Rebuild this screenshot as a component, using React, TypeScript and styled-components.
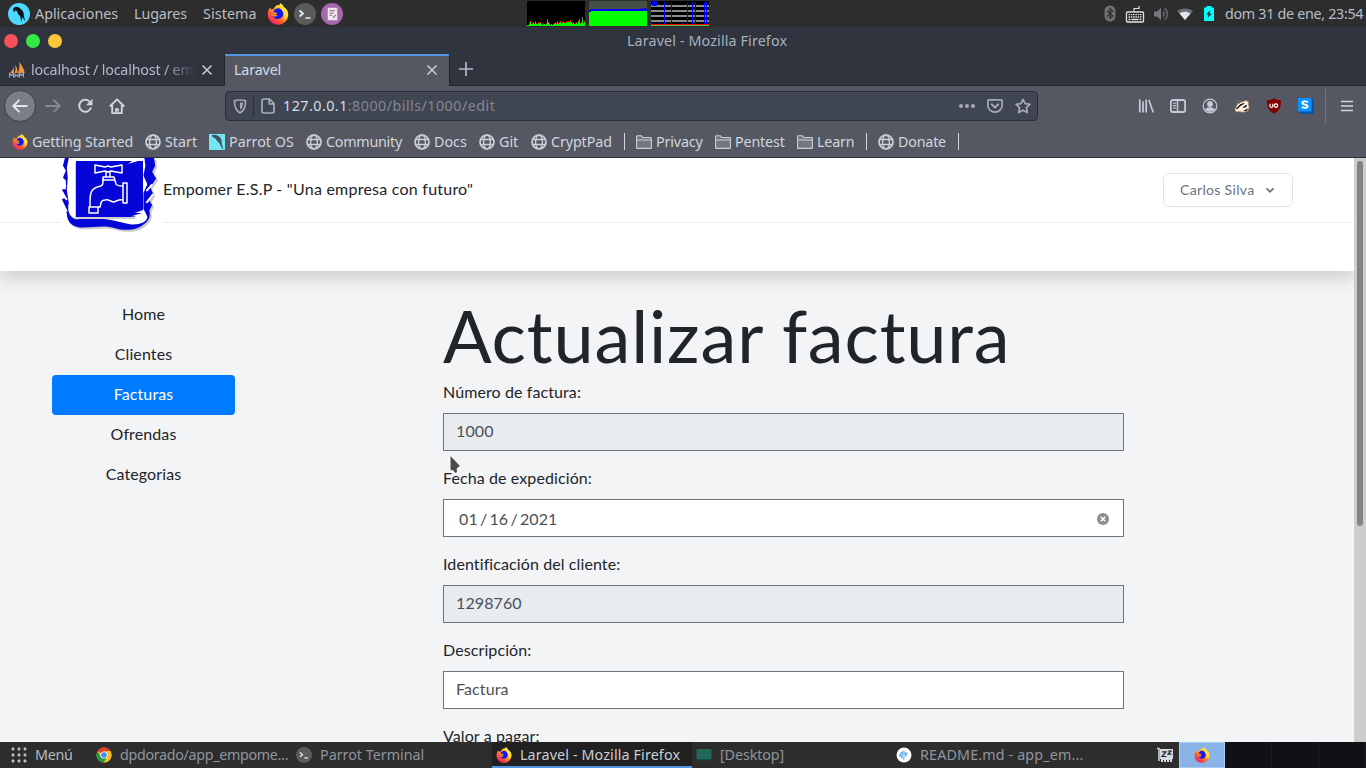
import React from 'react';
import styled, { createGlobalStyle } from 'styled-components';

const ui = '"Noto Sans", "Open Sans", sans-serif';
const web = 'Lato, "Noto Sans", sans-serif';

const GlobalStyle = createGlobalStyle`
  * { box-sizing: border-box; }
  body { margin: 0; overflow: hidden; background: #2d2d2d; }
  svg { display: block; flex: none; }
`;

const Screen = styled.div`
  position: relative;
  width: 1366px;
  height: 768px;
  display: flex;
  flex-direction: column;
  overflow: hidden;
  font: 14.3px/20px ${ui};
`;

const Label = styled.span<{ $w?: number; $ls?: number; $color?: string }>`
  flex: none;
  white-space: pre;
  width: ${p => (p.$w ? p.$w + 'px' : 'auto')};
  letter-spacing: ${p => p.$ls ?? 0}px;
  color: ${p => p.$color ?? 'inherit'};
`;

const TopPanel = styled.header`
  height: 27px;
  flex: none;
  display: flex;
  align-items: center;
  padding: 0 4px 0 8px;
  background: #2d2d2d;
  color: #b9bec6;
`;
const PanelMenus = styled.div`
  display: flex;
  align-items: center;
  flex: none;
  width: 237px;
  padding-left: 5px;
`;
const Launchers = styled.div`
  display: flex;
  flex: none;
  gap: 5px;
`;
const Monitors = styled.div`
  display: flex;
  flex: none;
  align-self: flex-start;
  padding-top: 1px;
  gap: 4px;
  margin: 0 auto 0 184px;
`;
const Tray = styled.div`
  display: flex;
  align-items: center;
`;
const TrayIcon = styled.div<{ $w: number }>`
  width: ${p => p.$w}px;
`;

const TitleBar = styled.div`
  height: 27px;
  flex: none;
  display: grid;
  grid-template-columns: 627px 1fr;
  align-items: center;
  background: #2f343f;
  color: #a9b0bc;
`;
const WindowButtons = styled.div`
  display: flex;
  gap: 8px;
  padding-left: 4px;
`;
const Dot = styled.i<{ $c: string }>`
  width: 14px;
  height: 14px;
  border-radius: 50%;
  background: ${p => p.$c};
`;

const TabStrip = styled.div`
  height: 32px;
  flex: none;
  display: flex;
  background: #2f343f;
  color: #b4bac6;
  border-bottom: 1px solid #22252e;
`;
const Tab = styled.div<{ $active?: boolean }>`
  display: flex;
  align-items: center;
  justify-content: space-between;
  flex: none;
  width: ${p => (p.$active ? 226 : 224)}px;
  height: ${p => (p.$active ? 32 : 31)}px;
  padding: ${p => (p.$active ? '1px 11px 1px 9px' : '2px 11px 1px 9px')};
  background: ${p => (p.$active ? '#555863' : 'transparent')};
  color: ${p => (p.$active ? '#d3dae3' : '#b4bac6')};
  border: ${p => (p.$active ? '1px solid #22252e' : '0')};
  border-width: ${p => (p.$active ? '0 1px' : '0')};
  box-shadow: ${p => (p.$active ? 'inset 0 2px #5294e2' : 'none')};
`;
const TabTitle = styled.div<{ $fade?: boolean }>`
  display: flex;
  align-items: center;
  gap: 6px;
  width: 187px;
  overflow: hidden;
  white-space: nowrap;
  mask-image: ${p => (p.$fade ? 'linear-gradient(90deg, #000 155px, transparent 187px)' : 'none')};
`;
const NewTab = styled.div`
  padding: 7px 8px;
`;

const NavBar = styled.div`
  height: 41px;
  flex: none;
  display: flex;
  align-items: center;
  padding-bottom: 1px;
  background: #555863;
  color: #c5cad6;
`;
const NavButtons = styled.div`
  display: flex;
  align-items: center;
  gap: 16px;
  width: 225px;
  padding-left: 4px;
`;
const BackButton = styled.div`
  display: grid;
  place-items: center;
  width: 32px;
  height: 32px;
  border-radius: 50%;
  border: 1px solid #3d404b;
  background: #7b7e86;
  margin-right: -7px;
`;
const UrlBar = styled.div`
  display: flex;
  align-items: center;
  width: 813px;
  height: 30px;
  padding: 0 6px 0 7px;
  border: 1px solid #2b2e39;
  border-radius: 4px;
  background: #404552;
  color: #828792;
`;
const UrlSep = styled.i`
  width: 1px;
  height: 22px;
  background: #2b2e39;
  margin: 0 7px 0 6px;
`;
const UrlText = styled.div`
  flex: 1;
  white-space: nowrap;
  letter-spacing: 0.47px;
  margin-left: 8px;
  b { font-weight: 400; color: #d8dce6; }
`;
const UrlActions = styled.div`
  display: flex;
  gap: 12px;
`;
const Extensions = styled.div`
  display: flex;
  align-items: center;
  gap: 16px;
  margin-left: 100px;
`;
const MenuButton = styled.div`
  display: flex;
  align-items: center;
  height: 34px;
  margin-left: 11px;
  padding-left: 14px;
  border-left: 1px solid #73767f;
`;

const Bookmarks = styled.nav`
  height: 31px;
  flex: none;
  display: flex;
  align-items: center;
  padding: 0 0 1px 12px;
  background: #555863;
  border-bottom: 1px solid #2b2e39;
  color: #d0d5de;
`;
const Bookmark = styled.div<{ $w: number; $ls?: number }>`
  display: flex;
  flex: none;
  align-items: center;
  gap: 4px;
  width: ${p => p.$w}px;
  letter-spacing: ${p => p.$ls ?? 0}px;
  white-space: nowrap;
`;
const BarSep = styled.i`
  width: 1px;
  height: 17px;
  margin-right: 11px;
  background: #d0d5de;
`;

const Viewport = styled.main`
  flex: 1;
  min-height: 0;
  display: flex;
  background: #f3f4f6;
  font: 16px/22px ${web};
  letter-spacing: 0.1px;
  color: #212529;
`;
const Page = styled.div`
  width: 1354px;
  overflow: hidden;
`;
const ScrollTrack = styled.div`
  width: 12px;
  padding: 3px;
  background: #cdcdcd;
`;
const ScrollThumb = styled.div`
  width: 6px;
  height: 365px;
  border-radius: 3px;
  background: #7f8383;
`;
const SiteHead = styled.div`
  height: 113px;
  background: #fff;
  box-shadow: 0 8px 16px rgba(0, 0, 0, 0.15);
`;
const SiteNav = styled.div`
  display: flex;
  align-items: center;
  justify-content: space-between;
  height: 65px;
  padding: 0 61px;
  border-bottom: 1px solid #edeef0;
`;
const Brand = styled.div`
  display: flex;
  align-items: flex-start;
  align-self: flex-start;
  height: 64px;
`;
const BrandText = styled.div`
  margin-top: 20px;
  letter-spacing: 0.23px;
`;
const UserButton = styled.div`
  display: flex;
  align-items: center;
  justify-content: space-between;
  width: 130px;
  height: 34px;
  padding: 0 15px 0 16px;
  border: 1px solid #dfe1e6;
  border-radius: 6px;
  color: #6b7280;
  font-size: 14px;
  letter-spacing: 0.33px;
`;
const Body = styled.div`
  display: flex;
  padding: 24px 0 0 52px;
`;
const Side = styled.nav`
  width: 183px;
  margin-right: 208px;
`;
const Pill = styled.div<{ $on?: boolean }>`
  height: 40px;
  line-height: 38px;
  text-align: center;
  border-radius: 4px;
  background: ${p => (p.$on ? '#007bff' : 'transparent')};
  color: ${p => (p.$on ? '#fff' : 'inherit')};
`;
const Form = styled.form`
  width: 681px;
`;
const Title = styled.h1`
  margin: -3.4px 0 3px;
  font-size: 72px;
  font-weight: 400;
  line-height: 86.4px;
  letter-spacing: 0.85px;
  white-space: nowrap;
`;
const Group = styled.div`
  height: 86px;
`;
const FieldLabel = styled.div`
  height: 24px;
  margin-bottom: 8px;
`;
const Field = styled.div<{ $off?: boolean }>`
  display: flex;
  align-items: center;
  justify-content: space-between;
  height: 38px;
  padding: 0 12px 2px;
  border: 1px solid #6c757d;
  background: ${p => (p.$off ? '#e9ecef' : '#fff')};
  color: #495057;
`;
const DateText = styled.span`
  padding: 3px 0 0 3px;
  word-spacing: -2px;
`;

const TaskBar = styled.footer`
  height: 26px;
  flex: none;
  display: flex;
  background: #2d2d2d;
  color: #8f959e;
`;
const Task = styled.div<{ $w: number; $on?: boolean; $pl?: number }>`
  display: flex;
  align-items: center;
  flex: none;
  gap: 8px;
  width: ${p => p.$w}px;
  padding-left: ${p => p.$pl ?? 4}px;
  background: ${p => (p.$on ? '#212121' : 'transparent')};
  color: ${p => (p.$on ? '#c9ced6' : 'inherit')};
  box-shadow: ${p => (p.$on ? 'inset 0 -2px #5294e2' : 'none')};
  white-space: nowrap;
`;
const Workspaces = styled.div`
  display: grid;
  grid-template-columns: 46px 47px 47px 47px;
  width: 187px;
  background: #0f1115;
`;
const Workspace = styled.div<{ $on?: boolean }>`
  display: grid;
  place-items: center;
  background: ${p => (p.$on ? '#8ab4e8' : 'transparent')};
  border: ${p => (p.$on ? '1px solid #a8cbf5' : '0 solid #1c1e22')};
  border-right-width: 1px;
`;
const Pointer = styled.div`
  position: absolute;
  left: 446px;
  top: 452px;
`;

const Firefox = ({ s = 16 }: { s?: number }) => (
  <svg width={s} height={s} viewBox="0 0 24 24">
    <defs>
      <linearGradient id="ffa" x1="0.85" y1="0.05" x2="0.2" y2="0.95">
        <stop offset="0" stopColor="#fff14a" />
        <stop offset="0.35" stopColor="#ffbd2b" />
        <stop offset="0.65" stopColor="#ff6a2a" />
        <stop offset="1" stopColor="#f5156c" />
      </linearGradient>
    </defs>
    <path d="M3.2 5.2 5 7l2.4-.6c1-3 4-4.600 6.600-4.400L14.500.3c2 1 3.200 2.600 3.900 4.300 3 1.600 4.800 4.800 4.800 8.300 0 6.200-5 10.800-11.200 10.800S.8 18.700.8 12.600C.8 9.500 1.800 7 3.200 5.200z" fill="url(#ffa)" />
    <path d="M7.500 8.300c1.800-2.600 5.500-3.300 7.800-1.500 2.800 2 3.200 6 1.200 8.600-2 2.500-6.500 2.900-8.700.7-1.200-1.200-1.600-2.700-1.300-4.200l3 .5 2.200-1.500c-1.400-.8-2.900-.9-4.400-.8z" fill="#1517f2" />
    <path d="M5.800 11.500c2 1.800 4 .6 5.200 1.400.6.700-.6 1.800-2 2-1.400 0-2.800-1-3.200-3.400z" fill="#ff9a20" />
    <path d="M14.500.3c2 1 3.200 2.600 3.900 4.300 2.800 1.500 4.600 4.500 4.700 7.700-.8 3.400-2.500 5-4.600 5.700 1.500-3.500.6-6.200-1-8.600C15.600 6.800 13.600 4 14.500.3z" fill="#ffdf3a" />
  </svg>
);

const Parrot = ({ s = 22, square = false }: { s?: number; square?: boolean }) => (
  <svg width={s} height={s} viewBox="0 0 22 22">
    {square ? <rect width="22" height="22" fill="#76e5f2" /> : <circle cx="11" cy="11" r="11" fill="#4fd8ff" />}
    <path d={square
      ? 'M3 2.500C7-.5 12 1.500 14.500 4c2.500 2 3 5 3 7.500.5 4 1 6.500 2.500 9.500-3-2-4.500-4.500-5-8-1 .5-2-1-3-3-1 0-2-2-3.500-4-2-.5-3-1.500-5-3.500z'
      : 'M5 6.500C5.500 3.500 9 3 11.500 5c3.500 2 4.500 5 4.300 7.500l1.400 6-3-4.500-1 5-1-6c-2-1-2.800-2.800-3-5C7.500 7 6.500 7.500 6.800 9.200 5.500 8.500 5 7.800 5 6.500z'}
      fill={square ? '#3d5566' : '#0c1116'} />
  </svg>
);

const Terminal = ({ s = 22 }: { s?: number }) => (
  <svg width={s} height={s} viewBox="0 0 22 22">
    <circle cx="11" cy="11" r="11" fill="#5b5b5b" />
    <path d="M5.500 7.500 9 10.500l-3.500 3M11.500 15h5" fill="none" stroke="#eee" strokeWidth="1.700" />
  </svg>
);

const Notes = () => (
  <svg width="22" height="22" viewBox="0 0 23 23">
    <circle cx="11.500" cy="11.500" r="11.500" fill="#a567ae" />
    <path d="M7 5h9l1 1v12H7z" fill="#eee6e8" />
    <path d="M9 8h5.500M9 10.500h4M9 13h2.500M12.500 15.500l3-3" stroke="#9b7b8f" strokeWidth="1.300" fill="none" />
  </svg>
);

const cpu = [1, 1, 3, 5, 2, 3, 4, 2, 5, 3, 2, 4, 3, 4, 2, 1, 3, 2, 1, 3, 7, 4, 3, 1, 2, 1, 2, 3, 4, 3, 5, 3, 4, 5, 3, 4, 5, 4, 3, 5, 4, 5, 4, 6, 4, 3, 4, 2, 3, 4, 2, 5, 7, 3, 4, 9, 3, 5];
const CpuGraph = () => (
  <svg width="58" height="25" shapeRendering="crispEdges">
    <rect width="58" height="25" fill="#000" />
    {cpu.map((h, i) => (
      <g key={i}>
        <rect x={i} y={25 - h} width="1" height={h} fill={h > 6 ? '#777' : '#e11'} />
        <rect x={i} y={25 - Math.ceil(h * 0.65)} width="1" height={Math.ceil(h * 0.65)} fill="#0f0" />
      </g>
    ))}
  </svg>
);
const MemGraph = () => (
  <svg width="58" height="25" shapeRendering="crispEdges">
    <rect width="58" height="25" fill="#455045" />
    <path d="M0 9h2V8h51V7h1v2h1V7h2v1h1v3H0z" fill="#00f" />
    <path d="M0 11h2v-1h56v15H0z" fill="#0f0" />
  </svg>
);
const NetGraph = () => (
  <svg width="58" height="25" shapeRendering="crispEdges">
    <rect width="58" height="25" fill="#000" />
    <path d="M0 5h58M0 10h58M0 15h58M0 20h58" stroke="#8b8b8b" strokeWidth="2" />
    <path d="M1 0h4.500v5H1zM13 1h1v22h-1zM20 1h1v22h-1zM36 1h1v22h-1zM41 1h1v22h-1zM44 1h1v22h-1zM53 1h1v22h-1zM55 1h1v22h-1zM0 22h3v1H0zM7 22h2v1H7zM30 22h3v1h-3z" fill="#00f" />
    <path d="M0 23h58v1H0z" fill="#f00" />
    <path d="M0 24h58v1H0z" fill="#5c3" />
  </svg>
);

const Bluetooth = () => (
  <svg width="12" height="17" viewBox="0 0 12 17">
    <rect x=".5" y=".5" width="11" height="16" rx="5.500" fill="#6f7175" />
    <path d="M3 5.500 8.800 11 6 13.500v-10L8.800 6 3 11.500" fill="none" stroke="#2d2d2d" strokeWidth="1.100" />
  </svg>
);
const Keyboard = () => (
  <svg width="20" height="20" viewBox="0 0 20 20">
    <path d="M9 7V4.500h5V2" fill="none" stroke="#ddd" strokeWidth="1.200" />
    <rect x="1.500" y="8" width="17" height="10" rx="1" fill="#222" stroke="#e4e4e4" strokeWidth="1.300" />
    <path d="M3.500 10.700h13M3.500 13h13" stroke="#e4e4e4" strokeWidth="1.300" strokeDasharray="1.500 .8" />
    <path d="M3.500 15.500h2M6.500 15.500h7M14.500 15.500h2" stroke="#e4e4e4" strokeWidth="1.300" />
  </svg>
);
const Speaker = () => (
  <svg width="16" height="16" viewBox="0 0 16 16">
    <path d="M1 5.500h3L8 2v12L4 10.500H1z" fill="#77797d" />
    <path d="M10 5.500c1.300 1.500 1.300 3.500 0 5M11.500 2.500c4 3 4 8 0 11" fill="none" stroke="#606266" strokeWidth="1.600" />
  </svg>
);
const Wifi = () => (
  <svg width="16" height="16" viewBox="0 0 16 16">
    <path d="M0 5C4 1.500 12 1.500 16 5l-8 9z" fill="#6d7076" />
    <path d="M2.500 7.500C6 5 10 5 13.500 7.500L8 14z" fill="#dfe5ee" />
  </svg>
);
const Battery = () => (
  <svg width="10" height="15" viewBox="0 0 10 15">
    <path d="M2.500 0h5v1.500H10V15H0V1.500h2.500z" fill="#00ffff" />
    <path d="M6.500 4 2 8.500h2.500L3.500 12 8 7.800H5.500z" fill="#2d2d2d" />
  </svg>
);

const Close = () => (
  <svg width="12" height="12" viewBox="0 0 12 12">
    <path d="m1.500 1.500 9 9m0-9-9 9" stroke="#c3c9d3" strokeWidth="1.600" />
  </svg>
);
const PhpMyAdmin = () => (
  <svg width="16" height="16" viewBox="0 0 16 16">
    <path d="M4.500 1.500c.5 3 .3 6-3.500 9.500h4zM5.800 2.500c1.200 2.500 1 5.500 0 8.500h2.700c.3-3.500-.6-6.500-2.700-8.500zM10 0c.8 3.500.5 7.500-1 11h6.800C15 7 13 3 10 0z" fill="#f4973b" />
    <path d="M.5 15.500v-4l2 2 2-2v4M6 15.500v-4M6 13.500h3M9 11.500v4M10.500 15.500v-4l2 2 2-2v4" fill="none" stroke="#a4a8c8" strokeWidth="1.100" />
  </svg>
);
const ArrowIcon = ({ flip = false }: { flip?: boolean }) => (
  <svg width="16" height="16" viewBox="0 0 16 16" transform={flip ? 'scale(-1 1)' : undefined}>
    <path d="M15.500 8H1.500M7.500 1.800 1.300 8l6.200 6.200" fill="none" stroke={flip ? '#868a95' : '#e2e6ee'} strokeWidth="1.900" strokeLinejoin="round" />
  </svg>
);
const Reload = () => (
  <svg width="16" height="16" viewBox="0 0 16 16">
    <path d="M12.500 3.600A6 6 0 1 0 14 9.500" fill="none" stroke="#d0d5df" strokeWidth="2" />
    <path d="M15.500.8v6.400H9z" fill="#d0d5df" />
  </svg>
);
const Home = () => (
  <svg width="16" height="16" viewBox="0 0 16 16">
    <path d="M.8 8.500 8 1.300l7.200 7.200M3.200 7v8.200h9.600V7" fill="none" stroke="#d0d5df" strokeWidth="1.900" strokeLinejoin="round" />
    <path d="M6.200 15v-4.800h3.600V15h-1v-2h-.9v2z" fill="#d0d5df" />
  </svg>
);
const Shield = () => (
  <svg width="14" height="15" viewBox="0 0 14 15">
    <path d="M7 1c2 0 4 .3 5.500.9C12.600 7 12 11 7 13.900 2 11 1.400 7 1.500 1.900 3 1.300 5 1 7 1z" fill="none" stroke="#a2a7b2" strokeWidth="1.700" />
    <path d="M7 3.500v7.500c2.300-1.700 2.900-4 3-7.200C9 3.600 8 3.500 7 3.500z" fill="#a2a7b2" />
  </svg>
);
const PageIcon = () => (
  <svg width="14" height="16" viewBox="0 0 14 16">
    <path d="M2.500 1H8.500l4.500 4.500v8c0 1-.5 1.500-1.500 1.500h-9c-1 0-1.500-.5-1.500-1.500v-11C1 1.500 1.500 1 2.500 1zM8.300 1v5H13" fill="none" stroke="#a9aeb9" strokeWidth="1.700" strokeLinejoin="round" />
  </svg>
);
const Dots = () => (
  <svg width="16" height="16" viewBox="0 0 16 16" fill="#a5aab5">
    <circle cx="2" cy="8" r="2" /><circle cx="8" cy="8" r="2" /><circle cx="14" cy="8" r="2" />
  </svg>
);
const Pocket = () => (
  <svg width="16" height="16" viewBox="0 0 16 16" fill="none" stroke="#a5aab5" strokeLinecap="round" strokeLinejoin="round">
    <path d="M2 1.800h12c.7 0 1.100.4 1.100 1.100V7.500a7.100 6.700 0 0 1-14.200 0V2.900c0-.7.400-1.100 1.100-1.100z" strokeWidth="1.700" />
    <path d="M4.700 6.300 8 9.500l3.300-3.200" strokeWidth="1.900" />
  </svg>
);
const Star = () => (
  <svg width="16" height="16" viewBox="0 0 16 16">
    <path d="m8 1.300 2.100 4.400 4.800.6-3.500 3.300.9 4.900L8 12.200l-4.300 2.300.9-4.900L1.100 6.300l4.800-.6z" fill="none" stroke="#a5aab5" strokeWidth="1.700" strokeLinejoin="round" />
  </svg>
);
const Library = () => (
  <svg width="16" height="16" viewBox="0 0 16 16">
    <path d="M1.800 1.500v13M5 3.500v11M8.200 1.500v13M10.800 1.800l4.500 12.700" stroke="#c5cad6" strokeWidth="1.700" />
  </svg>
);
const Sidebar = () => (
  <svg width="16" height="16" viewBox="0 0 16 16">
    <rect x=".9" y="2" width="14.200" height="12" rx="2" fill="none" stroke="#c5cad6" strokeWidth="1.800" />
    <path d="M7.500 2v12" stroke="#c5cad6" strokeWidth="1.500" />
    <path d="M3 5.200h3M3 7.600h3M3 10h3" stroke="#c5cad6" strokeWidth="1.100" />
  </svg>
);
const Account = () => (
  <svg width="16" height="16" viewBox="0 0 16 16">
    <circle cx="8" cy="8" r="6.800" fill="none" stroke="#c5cad6" strokeWidth="1.200" />
    <circle cx="8" cy="6" r="2.900" fill="#c5cad6" />
    <path d="M3 11.500c1.500-1.800 3-2.200 5-2.200s3.500.4 5 2.200c-1.400 1.700-3 2.300-5 2.300s-3.600-.6-5-2.300z" fill="#c5cad6" />
  </svg>
);
const Badger = () => (
  <svg width="16" height="16" viewBox="0 0 18 16">
    <path d="M1 12 4 6l1-3 3 1 5-2 3 1v3l1 3-2 5-5 1-5-1-2 1z" fill="#faf4ea" stroke="#c98f57" strokeWidth=".8" />
    <path d="M2 11 7 6l4-1.500 1 .8-5 3-3 3zM9.500 10l4-3.500 1.500 1.500-3 2zM10 13l3.500-.8 1-1.700 1 1.500-2 2zM5 3l2 1-2 2z" fill="#17130f" />
  </svg>
);
const Ublock = () => (
  <svg width="16" height="16" viewBox="0 0 16 16">
    <path d="M8 .3c2 1.200 4.500 1.800 7 2 0 6-.7 10-7 13.400C1.700 12.300 1 8.300 1 2.300c2.500-.2 5-.8 7-2z" fill="#800000" />
    <path d="M4 5.800v2.500c0 1.500 2.800 1.500 2.800 0V5.800" fill="none" stroke="#fff" strokeWidth="1.200" />
    <circle cx="10" cy="7.600" r="1.700" fill="none" stroke="#fff" strokeWidth="1.200" />
  </svg>
);
const Stylus = () => (
  <svg width="16" height="16" viewBox="0 0 16 16">
    <path d="M13 0h1.300L16 2v14H3l-2-2z" fill="#0556a5" />
    <rect width="13.500" height="13.500" fill="#0a93ff" />
    <path d="M9.800 4.200C8.500 3 4.400 3 4.400 5s5.200 1.200 5.200 3.300-4.300 2-5.600.6" fill="none" stroke="#fff" strokeWidth="1.900" />
  </svg>
);
const Burger = () => (
  <svg width="14" height="14" viewBox="0 0 14 14">
    <path d="M1 2.500h12M1 7h12M1 11.500h12" stroke="#d0d5df" strokeWidth="1.700" />
  </svg>
);
const Globe = () => (
  <svg width="16" height="16" viewBox="0 0 16 16" fill="none" stroke="#c9ced8" strokeWidth="1.400">
    <circle cx="8" cy="8" r="7" strokeWidth="1.700" />
    <ellipse cx="8" cy="8" rx="3.400" ry="7" />
    <path d="M1.500 5.500h13M1.500 10.500h13" />
  </svg>
);
const Folder = () => (
  <svg width="16" height="16" viewBox="0 0 16 16">
    <path d="M.6 13.900V2.600c0-.5.300-.8.800-.8h4l1.400 1.700h7.800c.5 0 .8.300.8.800v9.600c0 .3-.2.500-.5.500H1.100c-.3 0-.5-.2-.5-.5z" fill="#73767f" stroke="#c9ced8" strokeWidth="1.100" />
    <path d="M.6 6h14.800" stroke="#c9ced8" />
  </svg>
);

const FaucetLogo = () => (
  <svg width="102" height="78" viewBox="0 0 102 78">
    <rect width="102" height="78" fill="#fff" />
    <g transform="scale(.97 .975)">
      <path d="M4 0 2 8l3 5-3 7 3 3v9l-4 0 4 9-4 1 3 9 2 6c0 8 5 13 12 14 12 1 27-3 38 1 10 3 22 2 28-3 6-4 9-9 7-15l3-6-3-4 4-7-3-7 6-9-4-7 3-6-1-8z" fill="#cac9cd" transform="translate(2 2)" />
      <path d="M4 0 2 8l3 5-3 7 3 3v9l-4 0 4 9-4 1 3 9 2 6c0 8 5 13 12 14 12 1 27-3 38 1 10 3 22 2 28-3 6-4 9-9 7-15l3-6-3-4 4-7-3-7 6-9-4-7 3-6-1-8z" fill="#0505d8" />
      <path d="M8 0 6 10l1 10-1 13 2 13c-2 9 1 15 8 17 14-3 26-1 38 1l17 4c9 1 18-2 18-8l-4-8V36l4-9-4-9 2-10-1-8z" fill="#fff" />
      <path d="M1 24l4 5M1 35l5 8M1 45l5 10M94 27l-6 7M95 37l-7 9" stroke="#fff" strokeWidth="2" />
    </g>
    <path d="M15 5h60v56H15z" fill="#cfced5" transform="translate(-1 0)" />
    <path d="M15 3h56l-4 3 10-3h5v49l-8 3h7l-10 3h5l-7 1H15z" fill="#0505d8" />
    <g fill="none" stroke="#fff" strokeWidth="1.500" strokeLinejoin="round" transform="translate(-1 -2)">
      <path d="m35 9 10 2 3-1 3 1 11-2v8l-11-2-3 1-3-1-10 2zM46 15v6M50 15v6M43 21h11l2 7c1 2 3 2 7 2v-3h4v20h-4v-3c-4-1-6 1-9 2-3 0-5-3-9-2-4 0-4 3-5 7H30c0-12-1-19 11-21 2-1 2-3 2-4zM29 51h9v6h-9zM63 28v18M42 24h13" />
    </g>
  </svg>
);

const Apps = () => (
  <svg width="16" height="16" viewBox="0 0 16 16" fill="#b9c0cb">
    {[2, 8, 14].map(y => [2, 8, 14].map(x => <rect key={`${x}-${y}`} x={x - 1.400} y={y - 1.400} width="2.800" height="2.800" rx=".8" />))}
  </svg>
);
const Chrome = () => (
  <svg width="16" height="16" viewBox="0 0 16 16">
    <circle cx="8" cy="8" r="7.500" fill="#fbc116" />
    <path d="M8 8 1.500 4.250A7.500 7.500 0 0 1 14.500 4.250H8z" fill="#e33b2e" />
    <path d="M1.500 4.250 4.800 9.800 8 15.500A7.500 7.500 0 0 1 1.500 4.250zM8 15.500l3.200-5.700H4.800z" fill="#229a4b" />
    <path d="M8 15.500l3.300-5.700L11.200 4.250h3.300A7.500 7.500 0 0 1 8 15.500z" fill="#fbc116" />
    <circle cx="8" cy="8" r="3.600" fill="#fff" />
    <circle cx="8" cy="8" r="2.800" fill="#4285f4" />
  </svg>
);
const Desktop = () => (
  <svg width="16" height="16" viewBox="0 0 16 16">
    <path d="M.5 2h15v11H.5z" fill="#22685a" />
    <path d="M.5 12h15v1.500H.5z" fill="#174c42" />
  </svg>
);
const Editor = () => (
  <svg width="16" height="16" viewBox="0 0 16 16">
    <circle cx="8" cy="8" r="7.500" fill="#fff" />
    <path d="m4 6 3-2 1-1 1 2 3 1-1 3-2 1-1 3-2-2-3-2z" fill="#6eb5e8" />
    <path d="m5 7 3 4 3-4M8 4v7" stroke="#d9effc" fill="none" strokeWidth=".8" />
  </svg>
);
const Sleep = () => (
  <svg width="18" height="16" viewBox="0 0 18 16">
    <path d="M1 1.500h2V14" fill="none" stroke="#d6dae2" strokeWidth="1.500" />
    <path d="M4 2h13v10h-1v3h-2v-2h-1v2h-2v-2h-1v2H8v-2H7v2H5v-3H4z" fill="#d6dae2" />
    <path d="M6 4.800h4L6 9.500h4.500M12 4h3l-3 3.200h3.500" fill="none" stroke="#26282d" strokeWidth="1.200" />
  </svg>
);

const fields = [
  { label: 'Número de factura:', value: '1000', off: true },
  { label: 'Fecha de expedición:', value: '01 / 16 / 2021', date: true },
  { label: 'Identificación del cliente:', value: '1298760', off: true },
  { label: 'Descripción:', value: 'Factura' },
];

export default function App() {
  return (
    <Screen>
      <GlobalStyle />
      <TopPanel>
        <Parrot />
        <PanelMenus>
          <Label $w={99}>Aplicaciones</Label>
          <Label $w={69} $ls={-0.1}>Lugares</Label>
          <Label $w={64} $ls={0.1}>Sistema</Label>
        </PanelMenus>
        <Launchers><Firefox s={22} /><Terminal /><Notes /></Launchers>
        <Monitors><CpuGraph /><MemGraph /><NetGraph /></Monitors>
        <Tray>
          <TrayIcon $w={21}><Bluetooth /></TrayIcon>
          <TrayIcon $w={28}><Keyboard /></TrayIcon>
          <TrayIcon $w={24}><Speaker /></TrayIcon>
          <TrayIcon $w={27}><Wifi /></TrayIcon>
          <TrayIcon $w={21}><Battery /></TrayIcon>
          <Label $w={137} $ls={-0.3}>dom 31 de ene, 23:54</Label>
        </Tray>
      </TopPanel>
      <TitleBar>
        <WindowButtons><Dot $c="#f9505a" /><Dot $c="#35e845" /><Dot $c="#fcc737" /></WindowButtons>
        <Label $ls={0.13}>Laravel - Mozilla Firefox</Label>
      </TitleBar>
      <TabStrip>
        <Tab>
          <TabTitle $fade><PhpMyAdmin /><Label $ls={-0.2}>localhost / localhost / emp</Label></TabTitle>
          <Close />
        </Tab>
        <Tab $active><TabTitle><Label $ls={-0.15}>Laravel</Label></TabTitle><Close /></Tab>
        <NewTab>
          <svg width="16" height="16" viewBox="0 0 16 16"><path d="M8 1v14M1 8h14" stroke="#b4bac6" strokeWidth="1.700" /></svg>
        </NewTab>
      </TabStrip>
      <NavBar>
        <NavButtons>
          <BackButton><ArrowIcon /></BackButton>
          <ArrowIcon flip /><Reload /><Home />
        </NavButtons>
        <UrlBar>
          <Shield /><UrlSep /><PageIcon />
          <UrlText><b>127.0.0.1</b>:8000/bills/1000/edit</UrlText>
          <UrlActions><Dots /><Pocket /><Star /></UrlActions>
        </UrlBar>
        <Extensions>
          <Library /><Sidebar /><Account /><Badger /><Ublock /><Stylus />
        </Extensions>
        <MenuButton><Burger /></MenuButton>
      </NavBar>
      <Bookmarks>
        <Bookmark $w={133} $ls={-0.1}><Firefox />Getting Started</Bookmark>
        <Bookmark $w={64}><Globe />Start</Bookmark>
        <Bookmark $w={97}><Parrot s={16} square />Parrot OS</Bookmark>
        <Bookmark $w={108} $ls={-0.25}><Globe />Community</Bookmark>
        <Bookmark $w={65}><Globe />Docs</Bookmark>
        <Bookmark $w={52}><Globe />Git</Bookmark>
        <Bookmark $w={93} $ls={-0.1}><Globe />CryptPad</Bookmark>
        <BarSep />
        <Bookmark $w={79} $ls={-0.15}><Folder />Privacy</Bookmark>
        <Bookmark $w={82} $ls={-0.15}><Folder />Pentest</Bookmark>
        <Bookmark $w={69} $ls={-0.2}><Folder />Learn</Bookmark>
        <BarSep />
        <Bookmark $w={80} $ls={-0.2}><Globe />Donate</Bookmark>
        <BarSep />
      </Bookmarks>
      <Viewport>
        <Page>
          <SiteHead>
            <SiteNav>
              <Brand>
                <FaucetLogo />
                <BrandText>Empomer E.S.P - "Una empresa con futuro"</BrandText>
              </Brand>
              <UserButton>
                Carlos Silva
                <svg width="14" height="14" viewBox="0 0 14 14"><path d="m3.500 5.300 3.500 3.500 3.500-3.500" fill="none" stroke="#6b7280" strokeWidth="1.800" /></svg>
              </UserButton>
            </SiteNav>
          </SiteHead>
          <Body>
            <Side>
              <Pill>Home</Pill>
              <Pill>Clientes</Pill>
              <Pill $on>Facturas</Pill>
              <Pill>Ofrendas</Pill>
              <Pill>Categorias</Pill>
            </Side>
            <Form>
              <Title>Actualizar factura</Title>
              {fields.map(f => (
                <Group key={f.label}>
                  <FieldLabel>{f.label}</FieldLabel>
                  <Field $off={f.off}>
                    {f.date ? <DateText>{f.value}</DateText> : f.value}
                    {f.date && (
                      <svg width="16" height="16" viewBox="0 0 16 16">
                        <circle cx="8" cy="10" r="6" fill="#8a8d91" />
                        <path d="m5.800 7.800 4.400 4.400m0-4.400-4.400 4.400" stroke="#fff" strokeWidth="1.600" />
                      </svg>
                    )}
                  </Field>
                </Group>
              ))}
              <FieldLabel>Valor a pagar:</FieldLabel>
            </Form>
          </Body>
        </Page>
        <ScrollTrack><ScrollThumb /></ScrollTrack>
      </Viewport>
      <TaskBar>
        <Task $w={92} $pl={11}><Apps /><Label $color="#b5bac3" $ls={-0.25}>Menú</Label></Task>
        <Task $w={200}><Chrome /><Label $ls={-0.32}>dpdorado/app_empome...</Label></Task>
        <Task $w={200}><Terminal s={16} />Parrot Terminal</Task>
        <Task $w={200} $on><Firefox /><Label $ls={0.13}>Laravel - Mozilla Firefox</Label></Task>
        <Task $w={200}><Desktop /><Label $ls={-0.1}>[Desktop]</Label></Task>
        <Task $w={260}><Editor /><Label $ls={0.15}>README.md - app_em...</Label></Task>
        <Task $w={27}><Sleep /></Task>
        <Workspaces>
          <Workspace $on><Firefox /></Workspace><Workspace /><Workspace /><Workspace />
        </Workspaces>
      </TaskBar>
      <Pointer>
        <svg width="18" height="24" viewBox="0 0 18 24">
          <path d="M4 3v16l3-.5 2 3 2.500-1-.3-4L14.500 14z" fill="#4b4b4b" stroke="#fff" strokeWidth="1" />
        </svg>
      </Pointer>
    </Screen>
  );
}
